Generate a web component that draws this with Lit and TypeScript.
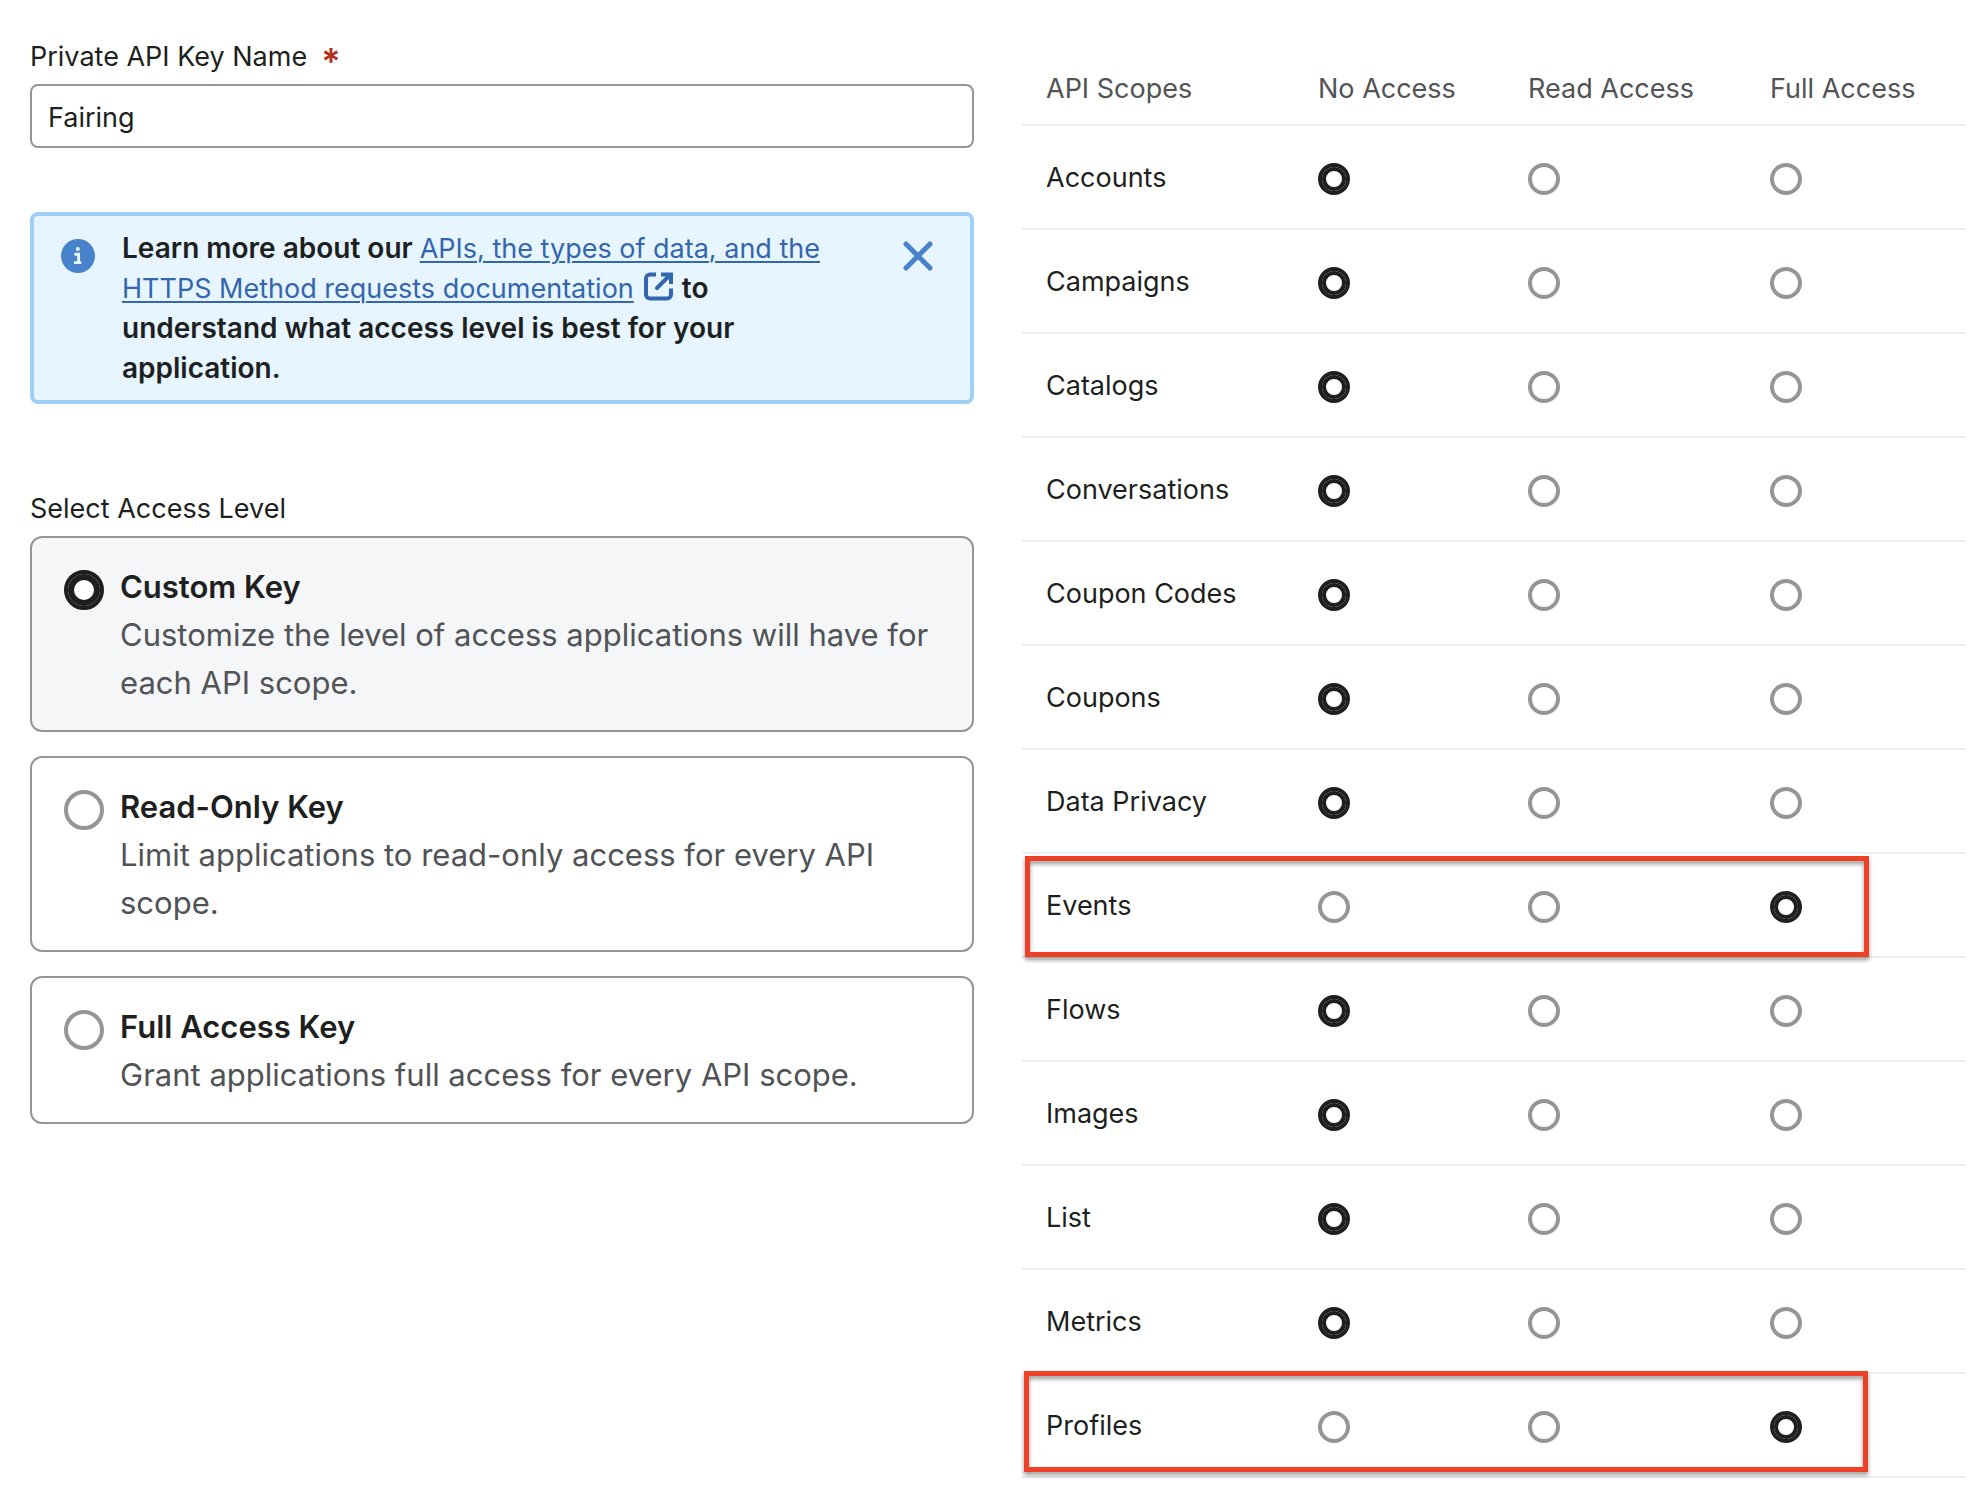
import { LitElement, html, css } from "lit";
import { customElement, state } from "lit/decorators.js";
import { classMap } from "lit/directives/class-map.js";

type Access = "none" | "read" | "full";

interface Scope {
  name: string;
  access: Access;
  mark?: "lower" | "upper";
}

const LEVELS = [
  {
    id: "custom",
    title: "Custom Key",
    text: "Customize the level of access applications will have for each API scope.",
  },
  {
    id: "read",
    title: "Read-Only Key",
    text: "Limit applications to read-only access for every API scope.",
  },
  {
    id: "full",
    title: "Full Access Key",
    text: "Grant applications full access for every API scope.",
  },
];

const COLUMNS: { id: Access; label: string }[] = [
  { id: "none", label: "No Access" },
  { id: "read", label: "Read Access" },
  { id: "full", label: "Full Access" },
];

const radioStyles = css`
  .radio {
    appearance: none;
    box-sizing: border-box;
    display: block;
    flex: none;
    margin: 0;
    border: 4px solid #949596;
    border-radius: 50%;
    background: #fff;
    cursor: pointer;
  }
  .radio:checked {
    border-color: #1d1f21;
  }
`;

@customElement("key-form")
class KeyForm extends LitElement {
  @state() private level = "custom";
  @state() private showNotice = true;

  static styles = [
    radioStyles,
    css`
      :host {
        display: block;
      }
      .label {
        display: flex;
        gap: 14px;
        height: 40px;
        margin-bottom: 7px;
      }
      .required {
        color: #b3301f;
        font-size: 36px;
        font-weight: 600;
        line-height: 48px;
      }
      .name {
        box-sizing: border-box;
        display: block;
        width: 100%;
        height: 64px;
        padding: 2px 16px 0;
        border: 2px solid #949596;
        border-radius: 8px;
        background: #fff;
        color: inherit;
        font: inherit;
      }
      .notice {
        display: flex;
        align-items: flex-start;
        margin: 64px 0 85px;
        padding: 12px 37px 12px 27px;
        border: 4px solid #9fcff4;
        border-radius: 8px;
        background: #e6f5ff;
      }
      .info {
        flex: none;
        margin: 11px 27px 0 0;
      }
      .message {
        flex: 1;
        margin: 0;
        font-size: 28px;
        font-weight: 600;
      }
      .link {
        color: #3466ad;
        font-size: 27px;
        font-weight: 400;
        line-height: 32px;
        text-decoration-thickness: 2px;
        text-underline-offset: 3px;
      }
      .external {
        margin: 0 2px 0 10px;
        vertical-align: -3px;
      }
      .close {
        display: flex;
        margin: 13px 0 0 40px;
        padding: 0;
        border: 0;
        background: none;
        cursor: pointer;
      }
      .levels {
        display: flex;
        flex-direction: column;
        gap: 24px;
        margin: 0;
        padding: 0;
        border: 0;
      }
      .legend {
        margin-bottom: 7px;
        padding: 0;
      }
      .card {
        display: flex;
        gap: 16px;
        padding: 25px 32px 23px;
        border: 2px solid #949596;
        border-radius: 12px;
        font-size: 31px;
        line-height: 48px;
        cursor: pointer;
      }
      .card.selected {
        background: #f4f6f8;
      }
      .card .radio {
        width: 40px;
        height: 40px;
        margin-top: 7px;
      }
      .card .radio:checked {
        box-shadow: inset 0 0 0 6px #1d1f21;
      }
      .body {
        display: flex;
        flex-direction: column;
      }
      .title {
        font-weight: 600;
      }
      .text {
        color: #515356;
      }
    `,
  ];

  render() {
    return html`
      <label class="label" for="key-name">
        Private API Key Name <span class="required">*</span>
      </label>
      <input class="name" id="key-name" type="text" value="Fairing" required />

      ${this.showNotice ? this.renderNotice() : null}

      <fieldset class="levels">
        <legend class="legend">Select Access Level</legend>
        ${LEVELS.map(
          (l) => html`
            <label class=${classMap({ card: true, selected: l.id === this.level })}>
              <input
                class="radio"
                type="radio"
                name="level"
                .value=${l.id}
                .checked=${l.id === this.level}
                @change=${() => (this.level = l.id)}
              />
              <span class="body">
                <span class="title">${l.title}</span>
                <span class="text">${l.text}</span>
              </span>
            </label>
          `
        )}
      </fieldset>
    `;
  }

  private renderNotice() {
    return html`
      <section class="notice">
        <svg class="info" width="34" height="34" viewBox="0 0 34 34" aria-hidden="true">
          <circle cx="17" cy="17" r="17" fill="#4782cb" />
          <circle cx="16.8" cy="10" r="2" fill="#e6f5ff" />
          <path d="M13.400 15.200h4.200v8.400M13 23.600h7.400" fill="none" stroke="#e6f5ff" stroke-width="2.900" />
        </svg>
        <p class="message">
          Learn more about our
          <a class="link" href="#docs">APIs, the types of data, and the HTTPS Method requests documentation</a
          ><svg class="external" width="29" height="29" viewBox="0 0 29 29" aria-hidden="true">
            <g fill="none" stroke="#3466ad" stroke-width="4">
              <path d="M12 2.400H6a4 4 0 0 0-4 4V22.600a4 4 0 0 0 4 4H23a4 4 0 0 0 4-4V16.500" />
              <path d="M13 16L25 4" stroke-linecap="round" />
              <path d="M17 2.500H27V12" />
            </g>
          </svg>
          to understand what access level is best for your application.
        </p>
        <button class="close" type="button" aria-label="Dismiss" @click=${() => (this.showNotice = false)}>
          <svg width="30" height="30" viewBox="0 0 30 30" aria-hidden="true">
            <path d="M3 3L27 27M27 3L3 27" stroke="#4782cb" stroke-width="5" stroke-linecap="round" />
          </svg>
        </button>
      </section>
    `;
  }
}

@customElement("scope-table")
class ScopeTable extends LitElement {
  @state() private scopes: Scope[] = [
    { name: "Accounts", access: "none" },
    { name: "Campaigns", access: "none" },
    { name: "Catalogs", access: "none" },
    { name: "Conversations", access: "none" },
    { name: "Coupon Codes", access: "none" },
    { name: "Coupons", access: "none" },
    { name: "Data Privacy", access: "none" },
    { name: "Events", access: "full", mark: "lower" },
    { name: "Flows", access: "none" },
    { name: "Images", access: "none" },
    { name: "List", access: "none" },
    { name: "Metrics", access: "none" },
    { name: "Profiles", access: "full", mark: "upper" },
  ];

  static styles = [
    radioStyles,
    css`
      :host {
        display: block;
      }
      .table {
        width: 100%;
        table-layout: fixed;
        border-collapse: separate;
        border-spacing: 0;
      }
      .col-scope {
        width: 272px;
      }
      .col-none {
        width: 210px;
      }
      .col-read {
        width: 242px;
      }
      .cell {
        box-sizing: border-box;
        height: 104px;
        padding: 2px 0 0 24px;
        border-bottom: 2px solid #ededee;
        font-weight: 400;
        text-align: left;
        vertical-align: middle;
      }
      .head {
        height: 74px;
        color: #515356;
      }
      .row {
        position: relative;
      }
      .radio {
        width: 32px;
        height: 32px;
        margin-top: 2px;
      }
      .radio:checked {
        box-shadow: inset 0 0 0 4px #1d1f21;
      }
      .mark {
        position: absolute;
        box-sizing: border-box;
        width: calc(100% - 100px);
        height: 101px;
        border: 5px solid #ec4126;
        filter: drop-shadow(0 3px 2px rgba(0, 0, 0, 0.4));
        pointer-events: none;
      }
      .mark.lower {
        top: 2px;
        left: 3px;
      }
      .mark.upper {
        top: -3px;
        left: 2px;
      }
    `,
  ];

  private pick(index: number, access: Access) {
    this.scopes = this.scopes.map((s, i) => (i === index ? { ...s, access } : s));
  }

  render() {
    return html`
      <table class="table">
        <colgroup>
          <col class="col-scope" />
          <col class="col-none" />
          <col class="col-read" />
          <col />
        </colgroup>
        <thead>
          <tr>
            <th class="cell head" scope="col">API Scopes</th>
            ${COLUMNS.map((c) => html`<th class="cell head" scope="col">${c.label}</th>`)}
          </tr>
        </thead>
        <tbody>
          ${this.scopes.map(
            (s, i) => html`
              <tr class="row">
                <th class="cell" scope="row">
                  ${s.name}${s.mark ? html`<span class="mark ${s.mark}"></span>` : null}
                </th>
                ${COLUMNS.map(
                  (c) => html`
                    <td class="cell">
                      <input
                        class="radio"
                        type="radio"
                        name="scope-${i}"
                        aria-label="${s.name}: ${c.label}"
                        .checked=${s.access === c.id}
                        @change=${() => this.pick(i, c.id)}
                      />
                    </td>
                  `
                )}
              </tr>
            `
          )}
        </tbody>
      </table>
    `;
  }
}

@customElement("app-root")
class AppRoot extends LitElement {
  static styles = css`
    :host {
      display: block;
      background: #fff;
      color: #1d1f21;
      font-family: Inter, "Liberation Sans", sans-serif;
      font-size: 27px;
      line-height: 40px;
    }
    .page {
      display: grid;
      grid-template-columns: minmax(0, 1fr) minmax(0, 1fr);
      column-gap: 48px;
      padding: 37px 22px 8px 30px;
    }
    .scopes {
      padding-top: 15px;
    }
  `;

  render() {
    return html`
      <main class="page">
        <key-form></key-form>
        <scope-table class="scopes"></scope-table>
      </main>
    `;
  }
}
